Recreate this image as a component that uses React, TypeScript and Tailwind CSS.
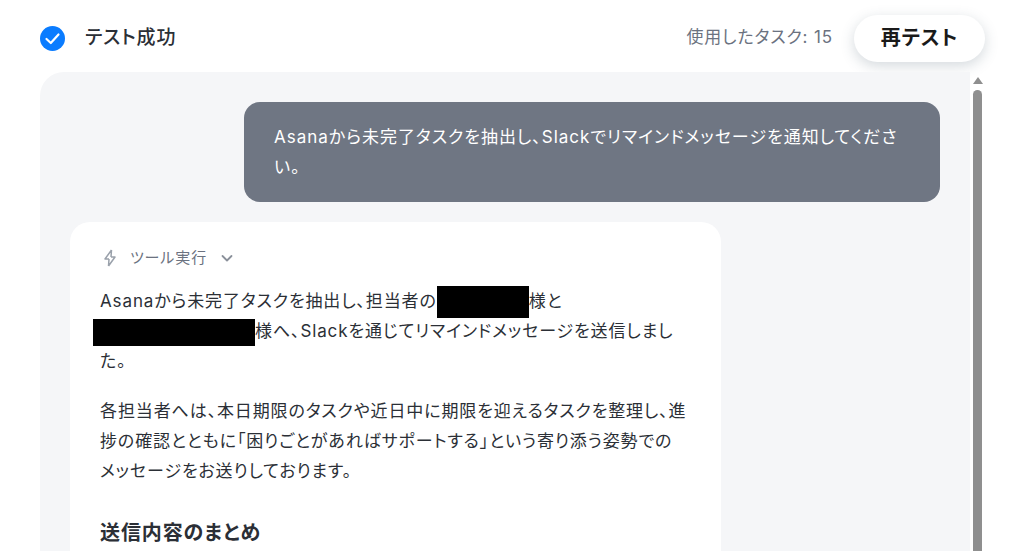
import React from "react";

const font = { fontFamily: 'Inter,"Noto Sans CJK JP",sans-serif', fontFeatureSettings: '"palt"' };

export default function App() {
  return (
    <div className="h-[551px] w-[1012px] overflow-hidden bg-white tracking-[0.055em]" style={font}>
      <header className="flex h-[72px] items-center pl-[40px] pr-[27px] pt-[4px]">
        <svg width="25" height="25" viewBox="0 0 25 25" className="shrink-0">
          <circle cx="12.5" cy="12.5" r="12.5" fill="#0a7cff" />
          <path d="M6.5 13 L10.8 17 L18.5 8.5" fill="none" stroke="#fff" strokeWidth="2.2" strokeLinecap="round" strokeLinejoin="round" />
        </svg>
        <span className="ml-[20px] text-[19px] font-medium text-[#2b2f36]">テスト成功</span>
        <span className="ml-auto text-[17px] text-[#6b7280]">使用したタスク: 15</span>
        <button className="ml-[21px] h-[47px] w-[131px] rounded-full bg-white text-[20px] font-semibold text-[#1a1a1a] shadow-[0_4px_14px_rgba(60,80,100,0.22)]">再テスト</button>
      </header>
      <div className="flex h-[479px]">
        <main className="ml-[40px] w-[930px] overflow-hidden rounded-tl-[24px] bg-[#f5f6f8] pl-[30px] pr-[30px] pt-[30px]">
          <div className="flex justify-end">
            <div className="w-[696px] rounded-[16px] bg-[#6f7683] px-[30px] py-[20px] text-[17px] leading-[30px] tracking-[0.058em] text-white">
              Asanaから未完了タスクを抽出し、Slackでリマインドメッセージを通知してください。
            </div>
          </div>
          <article className="mt-[20px] w-[651px] rounded-t-[20px] bg-white pl-[30px] pr-[28px] pt-[20px] pb-[20px] text-[17px] leading-[30px] text-[#2b2f36]">
            <div className="flex h-[32px] items-center text-[15px] text-[#6b7280]">
              <svg width="16" height="18" viewBox="0 0 16 18" fill="none" stroke="#9aa1ab" strokeWidth="1.5" strokeLinejoin="round" className="ml-[2px]">
                <path d="M9.5 1 L3 10 H7 M6.5 17 L13 8 H9 M9.5 1 L9 8 M6.5 17 L7 10" />
              </svg>
              <span className="ml-[12px]">ツール実行</span>
              <svg width="14" height="14" viewBox="0 0 14 14" fill="none" stroke="#8a909a" strokeWidth="1.8" strokeLinecap="round" strokeLinejoin="round" className="ml-[13px]">
                <path d="M2.5 5 L7 9.5 L11.5 5" />
              </svg>
            </div>
            <p className="mt-[12px]">
              Asanaから未完了タスクを抽出し、担当者の<span className="-my-[2px] inline-block h-[32px] w-[92px] bg-black align-middle" />様と<br />
              <span className="-ml-[7px] inline-block h-[27px] w-[162px] bg-black align-middle" />様へ、Slackを通じてリマインドメッセージを送信しました。
            </p>
            <p className="mt-[20px]">各担当者へは、本日期限のタスクや近日中に期限を迎えるタスクを整理し、進捗の確認とともに「困りごとがあればサポートする」という寄り添う姿勢での<br />メッセージをお送りしております。</p>
            <h2 className="mt-[32px] text-[20px] font-semibold">送信内容のまとめ</h2>
          </article>
        </main>
        <div className="relative w-[15px] shrink-0">
          <svg width="10" height="7" viewBox="0 0 10 7" className="absolute left-[3px] top-[5px]"><path d="M5 0 L10 7 H0 Z" fill="#8f8f8f" /></svg>
          <div className="absolute left-[3px] top-[18px] h-[480px] w-[9px] rounded-full bg-[#8f8f8f]" />
        </div>
      </div>
    </div>
  );
}
